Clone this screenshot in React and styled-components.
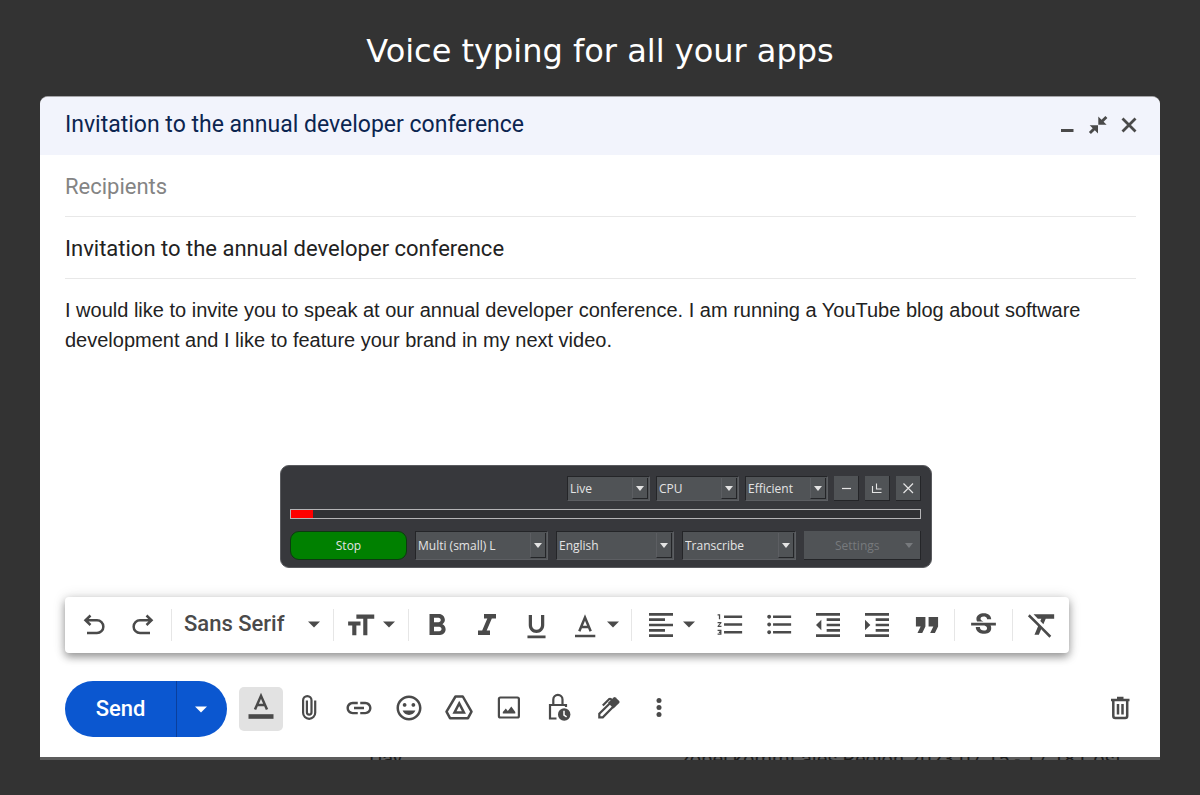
import React from 'react';
import styled, { createGlobalStyle, css } from 'styled-components';
import {
  MdFormatAlignLeft,
  MdFormatBold,
  MdFormatClear,
  MdFormatIndentDecrease,
  MdFormatIndentIncrease,
  MdFormatItalic,
  MdFormatListBulleted,
  MdFormatListNumbered,
  MdFormatQuote,
  MdFormatSize,
  MdFormatUnderlined,
  MdLink,
  MdOutlineInsertEmoticon,
  MdStrikethroughS,
} from 'react-icons/md';

const colors = {
  page: '#333333',
  header: '#f2f4fc',
  title: '#0b2550',
  text: '#222222',
  muted: '#848484',
  icon: '#4a4a4a',
  border: '#e8e8e8',
  blue: '#0b57d0',
  panel: '#37383c',
  control: '#505356',
};

const GlobalStyle = createGlobalStyle`
  *, *::before, *::after {
    box-sizing: border-box;
  }

  body {
    margin: 0;
    background: ${colors.page};
    font-family: Roboto, "Liberation Sans", sans-serif;
  }

  button, input, select, textarea {
    margin: 0;
    padding: 0;
    border: 0;
    background: none;
    color: inherit;
    font: inherit;
  }

  button {
    cursor: pointer;
  }
`;

const Page = styled.main`
  padding: 0 40px 36px;
`;

const Headline = styled.h1`
  margin: 0;
  padding: 32px 0 26px;
  color: #fff;
  font-family: 'DejaVu Sans', sans-serif;
  font-size: 32px;
  font-weight: 400;
  line-height: 38px;
  text-align: center;
`;

/* compose window */

const Compose = styled.section`
  position: relative;
  background: #fff;
  border-top: 1px solid #a5a5a8;
  border-radius: 8px 8px 0 0;
  overflow: hidden;
`;

const ComposeHeader = styled.header`
  display: flex;
  align-items: center;
  justify-content: space-between;
  height: 58px;
  padding: 0 16px 2px 25px;
  background: ${colors.header};
`;

const ComposeTitle = styled.h2`
  margin: 0;
  color: ${colors.title};
  font-size: 23px;
  font-weight: 400;
  line-height: 28px;
`;

const HeaderButtons = styled.div`
  display: flex;
  color: ${colors.icon};
`;

const HeaderButton = styled.button`
  display: flex;
  align-items: center;
  justify-content: center;
  width: 31px;
  height: 32px;
`;

const Fields = styled.div`
  padding: 0 24px 0 25px;
`;

const Field = styled.input`
  display: block;
  width: 100%;
  height: 62px;
  padding-top: 2px;
  border-bottom: 1px solid ${colors.border};
  outline: none;
  color: ${colors.text};
  font-size: 22px;

  &::placeholder {
    color: ${colors.muted};
    opacity: 1;
  }
`;

const Message = styled.textarea`
  display: block;
  width: 100%;
  height: 318px;
  padding-top: 16px;
  outline: none;
  resize: none;
  color: ${colors.text};
  font-family: 'Liberation Sans', sans-serif;
  font-size: 20px;
  line-height: 30px;
`;

/* formatting toolbar */

const Toolbar = styled.div`
  display: flex;
  align-items: center;
  width: fit-content;
  height: 56px;
  margin-left: 25px;
  padding: 0 3px 1px 4px;
  border-radius: 4px;
  background: #fff;
  color: ${colors.icon};
  box-shadow: 0 4px 8px rgba(0, 0, 0, 0.38), 0 0 14px rgba(0, 0, 0, 0.12);
`;

const Tool = styled.button`
  display: flex;
  align-items: center;
  justify-content: center;
  width: 49px;
  height: 44px;
`;

const MenuTool = styled.button`
  display: flex;
  align-items: center;
  gap: 6px;
  width: ${props => props.$width}px;
  height: 44px;
  padding-left: ${props => props.$indent}px;
`;

const Divider = styled.span`
  width: 1px;
  height: 32px;
  margin: 0 4px;
  background: #e6e6e6;
`;

const FontPicker = styled.label`
  position: relative;
  display: flex;
  align-items: center;
  width: 153px;
  height: 44px;

  svg {
    position: absolute;
    right: 9px;
    pointer-events: none;
  }
`;

const FontSelect = styled.select`
  width: 100%;
  height: 36px;
  padding: 0 36px 2px 8px;
  appearance: none;
  outline: none;
  font-size: 22px;
  font-weight: 500;
`;

/* bottom row */

const Actions = styled.footer`
  display: flex;
  align-items: center;
  height: 56px;
  margin: 28px 18px 20px 25px;
  color: ${colors.icon};
`;

const SendGroup = styled.div`
  display: flex;
  height: 56px;
  margin-right: 12px;
  border-radius: 28px;
  overflow: hidden;
  background: ${colors.blue};
  color: #fff;
`;

const SendButton = styled.button`
  width: 112px;
  padding-bottom: 2px;
  border-right: 1px solid #0a3f9c;
  font-size: 22px;
  font-weight: 500;
`;

const SendMenu = styled.button`
  display: flex;
  align-items: center;
  justify-content: center;
  width: 50px;
  padding-right: 2px;
`;

const ActionButton = styled.button`
  display: flex;
  align-items: center;
  justify-content: center;
  width: 50px;
  height: 44px;
  padding-bottom: 2px;

  ${props =>
    props.$active &&
    css`
      width: 44px;
      margin-right: 1px;
      padding-bottom: 4px;
      border-radius: 5px;
      background: #e2e2e2;
    `}
`;

const Discard = styled(ActionButton)`
  width: 44px;
  margin-left: auto;
`;

const Behind = styled.div`
  display: flex;
  align-items: center;
  height: 3px;
  padding-left: 329px;
  overflow: hidden;
  background: #5c5c5c;
  color: #1c1c1c;
  font-size: 20px;
  line-height: 20px;
  white-space: nowrap;
`;

const BehindSender = styled.span`
  flex: 0 0 311px;
`;

/* dictation widget floating over the message */

const Widget = styled.section`
  position: absolute;
  left: 240px;
  bottom: 189px;
  width: 652px;
  padding: 10px 10px 7px 9px;
  border: 1px solid #5a5b5f;
  border-radius: 9px;
  background: ${colors.panel};
  color: #e4e4e4;
  font-family: 'Open Sans', 'Noto Sans', sans-serif;
  font-size: 12px;
`;

const WidgetRow = styled.div`
  display: flex;
  justify-content: flex-end;
  gap: ${props => props.$gap}px;
`;

const Picker = styled.label`
  position: relative;
  display: flex;
  flex: ${props => props.$width} 1 0;
  max-width: ${props => props.$width}px;
  height: ${props => props.$height}px;
  border: 1px solid;
  border-color: #242528 #5c5e62 #5c5e62 #242528;
  background: ${colors.control};
`;

const PickerSelect = styled.select`
  width: 100%;
  padding-left: 2px;
  appearance: none;
  outline: none;
`;

const PickerArrow = styled.span`
  position: absolute;
  top: 1px;
  right: 1px;
  bottom: 1px;
  display: flex;
  align-items: center;
  justify-content: center;
  width: 16px;
  border-right: 1px solid #242528;
  border-bottom: 1px solid #242528;
  border-left: 1px solid #5c5e62;
  pointer-events: none;
`;

const SquareButton = styled.button`
  display: flex;
  align-items: center;
  justify-content: center;
  width: 25px;
  height: 25px;
  border-right: 1px solid #242528;
  border-bottom: 1px solid #242528;
  background: ${colors.control};
`;

const Level = styled.div`
  height: 10px;
  margin: 8px 0 12px;
  border: 1px solid #b4b4b6;
  background: #303134;
`;

const LevelFill = styled.div`
  height: 100%;
  background: #ff0000;
`;

const StopButton = styled.button`
  width: 117px;
  height: 29px;
  border: 1px solid #0c3a10;
  border-radius: 9px;
  background: #008000;
`;

const SettingsButton = styled.button`
  display: flex;
  align-items: center;
  justify-content: space-between;
  width: 117px;
  height: 29px;
  padding: 0 7px 0 31px;
  border-right: 1px solid #242528;
  border-bottom: 1px solid #242528;
  background: ${colors.control};
  color: #777a7d;
`;

const Icon = ({ size = 32, children }) => (
  <svg
    width={size}
    height={size}
    viewBox={`0 0 ${size} ${size}`}
    fill="none"
    stroke="currentColor"
    strokeWidth="2.5"
    aria-hidden="true"
  >
    {children}
  </svg>
);

const Caret = () => (
  <svg width="12" height="7" viewBox="0 0 12 7" fill="currentColor" aria-hidden="true">
    <path d="M0 .5h12L6 6.5z" />
  </svg>
);

const SmallCaret = () => (
  <svg width="8" height="5" viewBox="0 0 8 5" fill="currentColor" aria-hidden="true">
    <path d="M0 0h8L4 5z" />
  </svg>
);

const UndoIcon = () => (
  <Icon>
    <path d="M12.5 6.5l-5 4.8 5 4.7M7.5 11.3H19a6.3 6.3 0 0 1 0 12.7H9" />
  </Icon>
);

const RedoIcon = () => (
  <Icon>
    <path d="M19.5 6.5l5 4.8-5 4.7M24.5 11.3H13a6.3 6.3 0 0 0 0 12.7h10" />
  </Icon>
);

const TextColorIcon = () => (
  <Icon>
    <path d="M10.300 22.300L16 8.500l5.700 13.800M12.300 18h7.400" />
    <path d="M6 27h20.300" />
  </Icon>
);

const FormattingIcon = () => (
  <Icon>
    <path d="M10 18.500L16 4.800l6 13.700M12.200 14h7.600" />
    <path d="M3.500 25.500h25" strokeWidth="4.600" />
  </Icon>
);

const AttachIcon = () => (
  <Icon>
    <path
      d="M22.2 8.500v12.300a6 6 0 0 1-12.100 0V8.300a4.200 4.200 0 0 1 8.400 0v12a2.300 2.300 0 0 1-4.600 0V8.500"
      strokeWidth="2.200"
    />
  </Icon>
);

const DriveIcon = () => (
  <Icon>
    <path d="M12.500 4.500h7.300l8.700 15.200-3.500 6.500H7l-3.500-6.500z" strokeLinejoin="round" />
    <path d="M16.200 11.400l4.700 9h-9.400z" />
  </Icon>
);

const PictureIcon = () => (
  <Icon>
    <rect x="5.900" y="5.500" width="20" height="20" rx="1.500" strokeWidth="2.200" />
    <path d="M9.800 21.500v-1.500l3-3.500 2 2.500 3.500-4.500 4 5.500v1.500z" fill="currentColor" stroke="none" />
  </Icon>
);

const ConfidentialIcon = () => (
  <Icon>
    <path d="M13.500 26.500H7V13h16v2M10.300 13V7.500a4.600 4.600 0 0 1 9.200 0V13" strokeWidth="2.200" />
    <circle cx="21.200" cy="22.500" r="6.200" fill="currentColor" stroke="none" />
    <path d="M21 18.800v4.200l2.600 1.800" stroke="#fff" strokeWidth="1.500" />
  </Icon>
);

const PenIcon = () => (
  <Icon>
    <path d="M6.300 25.300v-3.500L18 10.200l3.400 3.400L9.800 25.300z" strokeWidth="2.200" />
    <path
      d="M15 10.800l5.600-5.400q1-.9 2 0l3.600 3.500q.9 1 0 2l-5.700 5.600z"
      fill="currentColor"
      stroke="none"
    />
    <path d="M9.800 13.500l6.200-6.300q1-.8 2 0l1.500 1.500" strokeWidth="2.200" />
  </Icon>
);

const MoreIcon = () => (
  <Icon>
    <g fill="currentColor" stroke="none">
      <circle cx="16" cy="8.500" r="2.500" />
      <circle cx="16" cy="15.500" r="2.500" />
      <circle cx="16" cy="22.500" r="2.500" />
    </g>
  </Icon>
);

const TrashIcon = () => (
  <Icon>
    <path d="M7 8h18.500M13 6h6.500M9.300 8v16q0 2 2 2h9.900q2 0 2-2V8" />
    <path d="M14 12v10.500M18.500 12v10.500" />
  </Icon>
);

const MinimizeIcon = () => (
  <Icon size={24}>
    <path d="M6 17.500h12.500" strokeWidth="3" />
  </Icon>
);

const CollapseIcon = () => (
  <Icon size={24}>
    <g fill="currentColor" stroke="none">
      <path d="M12.300 3.500v8.300h8.300l-3-3 3.800-3.800-2-2-3.900 3.700z" />
      <path d="M12 20.500v-8.300H3.700l3 3L2.900 19l2 2 3.900-3.700z" />
    </g>
  </Icon>
);

const CloseIcon = () => (
  <Icon size={24}>
    <path d="M5.500 5.500l13 13M18.500 5.500l-13 13" strokeWidth="2.800" />
  </Icon>
);

const WidgetPicker = ({ label, value, width, height }) => (
  <Picker $width={width} $height={height}>
    <PickerSelect aria-label={label} defaultValue={value}>
      <option>{value}</option>
    </PickerSelect>
    <PickerArrow>
      <SmallCaret />
    </PickerArrow>
  </Picker>
);

const DictationWidget = ({ level }) => (
  <Widget aria-label="Dictation">
    <WidgetRow $gap={6}>
      <WidgetPicker label="Mode" value="Live" width={83} height={25} />
      <WidgetPicker label="Device" value="CPU" width={83} height={25} />
      <WidgetPicker label="Performance" value="Efficient" width={83} height={25} />
      <SquareButton aria-label="Minimize">
        <Icon size={16}>
          <path d="M4 8.500h9" strokeWidth="1.200" />
        </Icon>
      </SquareButton>
      <SquareButton aria-label="Compact view">
        <Icon size={16}>
          <path d="M3.500 6v6.500h9M7.500 3.500v5.500h5" strokeWidth="1.100" />
        </Icon>
      </SquareButton>
      <SquareButton aria-label="Close">
        <Icon size={16}>
          <path d="M3.500 3.500l9.500 9.500M13 3.500L3.500 13" strokeWidth="1.200" />
        </Icon>
      </SquareButton>
    </WidgetRow>
    <Level>
      <LevelFill style={{ width: `${level}%` }} />
    </Level>
    <WidgetRow $gap={8}>
      <StopButton>Stop</StopButton>
      <WidgetPicker label="Model" value="Multi (small) L" width={133} height={29} />
      <WidgetPicker label="Language" value="English" width={118} height={29} />
      <WidgetPicker label="Task" value="Transcribe" width={114} height={29} />
      <SettingsButton disabled>
        Settings
        <SmallCaret />
      </SettingsButton>
    </WidgetRow>
  </Widget>
);

const FormatToolbar = () => (
  <Toolbar role="toolbar" aria-label="Formatting options">
    <Tool aria-label="Undo"><UndoIcon /></Tool>
    <Tool aria-label="Redo"><RedoIcon /></Tool>
    <Divider />
    <FontPicker>
      <FontSelect aria-label="Font" defaultValue="Sans Serif">
        <option>Sans Serif</option>
        <option>Serif</option>
      </FontSelect>
      <Caret />
    </FontPicker>
    <Divider />
    <MenuTool aria-label="Size" $width={66} $indent={7}>
      <Icon><MdFormatSize size={33} x={-1} y={0} /></Icon>
      <Caret />
    </MenuTool>
    <Divider />
    <Tool aria-label="Bold"><Icon><MdFormatBold size={36} x={-3} y={-1} /></Icon></Tool>
    <Tool aria-label="Italic"><Icon><MdFormatItalic size={36} x={-2} y={-1} /></Icon></Tool>
    <Tool aria-label="Underline"><Icon><MdFormatUnderlined size={31} x={1} y={2} /></Icon></Tool>
    <MenuTool aria-label="Text colour" $width={67} $indent={9}>
      <TextColorIcon />
      <Caret />
    </MenuTool>
    <Divider />
    <MenuTool aria-label="Align" $width={69} $indent={9}>
      <Icon><MdFormatAlignLeft size={32} /></Icon>
      <Caret />
    </MenuTool>
    <Tool aria-label="Numbered list"><Icon><MdFormatListNumbered size={31} x={1} y={0} /></Icon></Tool>
    <Tool aria-label="Bulleted list"><Icon><MdFormatListBulleted size={31} x={1} y={0} /></Icon></Tool>
    <Tool aria-label="Indent less"><Icon><MdFormatIndentDecrease size={32} /></Icon></Tool>
    <Tool aria-label="Indent more"><Icon><MdFormatIndentIncrease size={32} /></Icon></Tool>
    <Tool aria-label="Quote"><Icon><MdFormatQuote size={38} x={-2} y={-3} /></Icon></Tool>
    <Divider />
    <Tool aria-label="Strikethrough"><Icon><MdStrikethroughS size={33} x={-1} y={0} /></Icon></Tool>
    <Divider />
    <Tool aria-label="Remove formatting"><Icon><MdFormatClear size={35} x={-1} y={-2} /></Icon></Tool>
  </Toolbar>
);

const ComposeActions = () => (
  <Actions>
    <SendGroup>
      <SendButton>Send</SendButton>
      <SendMenu aria-label="More send options"><Caret /></SendMenu>
    </SendGroup>
    <ActionButton $active aria-label="Formatting options"><FormattingIcon /></ActionButton>
    <ActionButton aria-label="Attach files"><AttachIcon /></ActionButton>
    <ActionButton aria-label="Insert link"><Icon><MdLink size={30} x={1} y={1} /></Icon></ActionButton>
    <ActionButton aria-label="Insert emoji"><Icon><MdOutlineInsertEmoticon size={30} x={1} y={1} /></Icon></ActionButton>
    <ActionButton aria-label="Insert files using Drive"><DriveIcon /></ActionButton>
    <ActionButton aria-label="Insert photo"><PictureIcon /></ActionButton>
    <ActionButton aria-label="Confidential mode"><ConfidentialIcon /></ActionButton>
    <ActionButton aria-label="Insert signature"><PenIcon /></ActionButton>
    <ActionButton aria-label="More options"><MoreIcon /></ActionButton>
    <Discard aria-label="Discard draft"><TrashIcon /></Discard>
  </Actions>
);

const App = () => {
  const subject = 'Invitation to the annual developer conference';
  const message =
    'I would like to invite you to speak at our annual developer conference. I am running a YouTube blog about software development and I like to feature your brand in my next video.';

  return (
    <Page>
      <GlobalStyle />
      <Headline>Voice typing for all your apps</Headline>
      <Compose>
        <ComposeHeader>
          <ComposeTitle>{subject}</ComposeTitle>
          <HeaderButtons>
            <HeaderButton aria-label="Minimize"><MinimizeIcon /></HeaderButton>
            <HeaderButton aria-label="Exit full screen"><CollapseIcon /></HeaderButton>
            <HeaderButton aria-label="Close"><CloseIcon /></HeaderButton>
          </HeaderButtons>
        </ComposeHeader>
        <Fields>
          <Field aria-label="Recipients" placeholder="Recipients" />
          <Field aria-label="Subject" defaultValue={subject} />
          <Message aria-label="Message body" defaultValue={message} spellCheck={false} />
        </Fields>
        <FormatToolbar />
        <ComposeActions />
        <DictationWidget level={3.5} />
      </Compose>
      <Behind aria-hidden="true">
        <BehindSender>Day</BehindSender>
        <span>zobel kommt ales Region 2023.07.15 - 17.18 Cost</span>
      </Behind>
    </Page>
  );
};

export default App;
